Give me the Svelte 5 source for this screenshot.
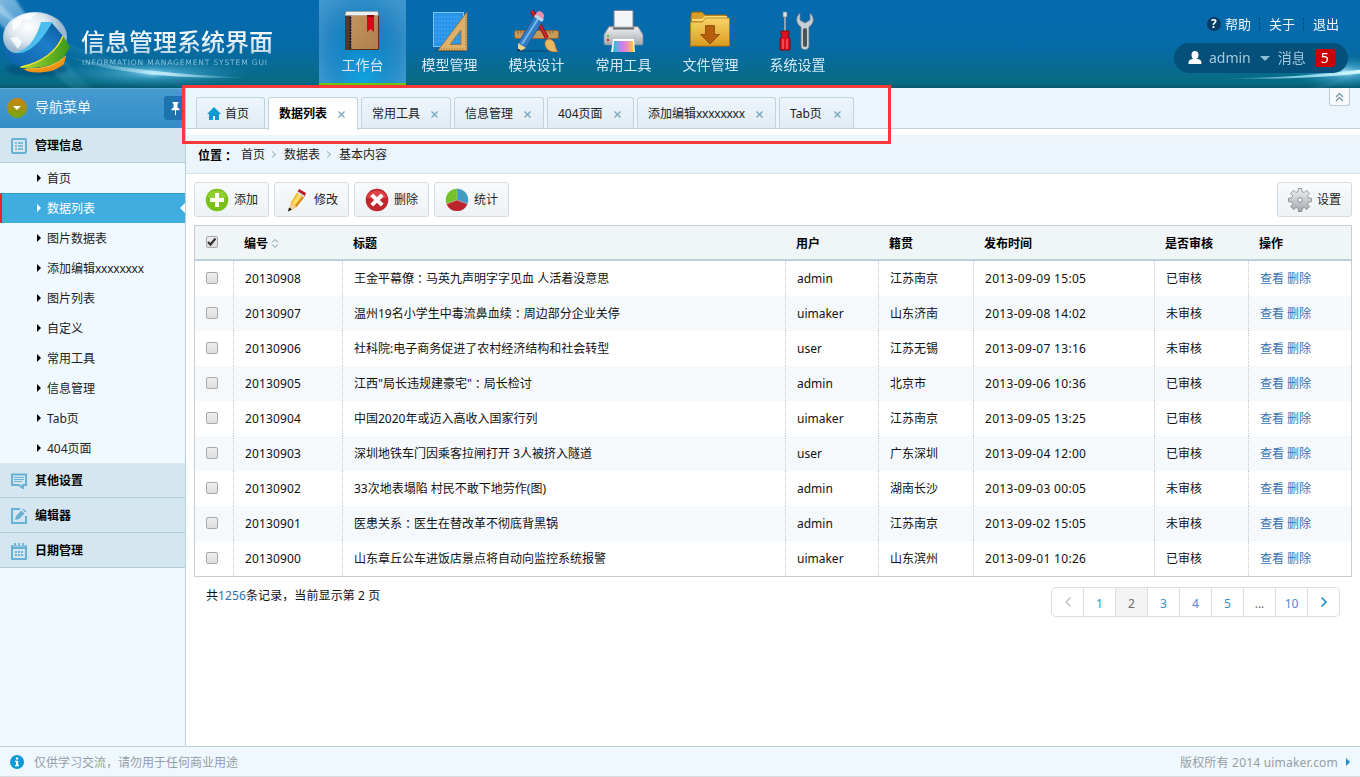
<script>
  const nav = ['工作台', '模型管理', '模块设计', '常用工具', '文件管理', '系统设置'];
  const menu = ['首页', '数据列表', '图片数据表', '添加编辑xxxxxxxx', '图片列表', '自定义', '常用工具', '信息管理', 'Tab页', '404页面'];
  const tabs = [
    ['首页', 69], ['数据列表', 90], ['常用工具', 90], ['信息管理', 90],
    ['404页面', 87], ['添加编辑xxxxxxxx', 139], ['Tab页', 75]
  ];
  const heads = ['标题', '用户', '籍贯', '发布时间', '是否审核', '操作'];
  const rows = [
    ['20130908', '王金平幕僚：马英九声明字字见血 人活着没意思', 'admin', '江苏南京', '2013-09-09 15:05', '已审核'],
    ['20130907', '温州19名小学生中毒流鼻血续：周边部分企业关停', 'uimaker', '山东济南', '2013-09-08 14:02', '未审核'],
    ['20130906', '社科院:电子商务促进了农村经济结构和社会转型', 'user', '江苏无锡', '2013-09-07 13:16', '未审核'],
    ['20130905', '江西"局长违规建豪宅"：局长检讨', 'admin', '北京市', '2013-09-06 10:36', '已审核'],
    ['20130904', '中国2020年或迈入高收入国家行列', 'uimaker', '江苏南京', '2013-09-05 13:25', '已审核'],
    ['20130903', '深圳地铁车门因乘客拉闸打开 3人被挤入隧道', 'user', '广东深圳', '2013-09-04 12:00', '已审核'],
    ['20130902', '33次地表塌陷 村民不敢下地劳作(图)', 'admin', '湖南长沙', '2013-09-03 00:05', '未审核'],
    ['20130901', '医患关系：医生在替改革不彻底背黑锅', 'admin', '江苏南京', '2013-09-02 15:05', '未审核'],
    ['20130900', '山东章丘公车进饭店景点将自动向监控系统报警', 'uimaker', '山东滨州', '2013-09-01 10:26', '已审核']
  ];
  const pages = ['<', '1', '2', '3', '4', '5', '...', '10', '>'];
</script>

{#snippet txt(s)}{#each s.split(/(：|x{3,})/) as p}{#if p === '：'}<span class="punct">{p}</span>{:else if p.startsWith('xxx')}<span class="tight">{p}</span>{:else}{p}{/if}{/each}{/snippet}

{#snippet navIcon(i)}
  <svg width="45" height="45" viewBox="0 0 45 45">
    {#if i === 0}
      <rect x="5" y="5" width="34" height="38" rx="1" fill="#5a2f16" />
      <rect x="11" y="6" width="27" height="36" fill="url(#wood)" />
      <rect x="5" y="5" width="6" height="37" fill="#4c3b33" />
      <path d="M10.500 7v35" stroke="#241510" stroke-width="1.500" stroke-dasharray="2 1" />
      <path d="M6 4.500h32l.5 4H5z" fill="#eef0ef" stroke="#9b8c7f" stroke-width=".5" />
      <path d="M27 8h7v17l-3.500-3-3.500 3z" fill="#d10b15" /><path d="M27 8h7v2h-7z" fill="#87060a" />
    {:else if i === 1}
      <ellipse cx="24" cy="43.500" rx="17" ry="1.500" fill="#06476e" opacity=".6" />
      <rect x="6.500" y="5.500" width="30" height="34" fill="#238fe8" stroke="#79c9fa" />
      <path d="M9 7v31M12 7v31M15 7v31M18 7v31M21 7v31M24 7v31M27 7v31M30 7v31M33 7v31M7 10h30M7 14h30M7 18h30M7 22h30M7 26h30M7 30h30M7 34h30" stroke="#50aef3" stroke-width=".5" />
      <path fill-rule="evenodd" d="M11 43.500 40 5v38.500zM23 37.500h11V23z" fill="#e0b069" stroke="#9a6d33" stroke-width=".8" />
      <path d="M14 42h23M38.500 10v30" stroke="#9a6d33" stroke-width="1.300" stroke-dasharray=".7 2" />
    {:else if i === 2}
      <ellipse cx="23" cy="44.500" rx="18" ry="1.500" fill="#06476e" opacity=".6" />
      <rect x=".5" y="23.500" width="44" height="8" rx="2" fill="#c99958" stroke="#916331" />
      <path d="M4 24v3m3-3v2m3-2v3m3-3v2m3-2v3m14-3v3m3-3v2m3-2v3m3-3v2" stroke="#6d4824" stroke-width=".8" />
      <path d="m18 4 15 27" stroke="#861118" stroke-width="4" /><path d="m18 4 15 27" stroke="#df2430" stroke-width="2" />
      <path d="M31 35c2-5 7-3 9 0 2 3 1 6 4 10-8 1-14-3-13-10z" fill="#e9b864" stroke="#95682e" stroke-width=".7" />
      <path d="m4 36 16-26 8 5-16 26-8 4z" fill="#327bc3" stroke="#17538d" stroke-width=".8" />
      <path d="M8 37 24 12" stroke="#76b8e8" stroke-width="2" />
      <path d="m20 10 2-3 8 5-2 3z" fill="#b9d6ea" />
      <path d="m22 7 1-2c3-2 7 1 7 4l-1 3z" fill="#f391a8" /><path d="m4 36 8 5-8 4z" fill="#f1d28c" /><path d="m4 42 3 1-3 2z" fill="#111" />
    {:else if i === 3}
      <path d="M8 19h29l5 8H3z" fill="#8f969d" /><path d="M13 3.500h19v17H13z" fill="#f4f5f7" stroke="#7a858f" />
      <path d="M8 20h29l5 8v8q0 2-2 2H5q-2 0-2-2v-8z" fill="url(#metal)" stroke="#858c94" stroke-width=".6" />
      <path d="M12 21.500h21" stroke="#63676d" stroke-width="2" />
      <path d="M12 32h21l1 14H10z" fill="white" /><path d="M13 34h19l1 11H12z" fill="url(#ink)" />
      <circle cx="7" cy="29" r="1.200" fill="#69c620" /><circle cx="7" cy="33" r="1.200" fill="#d82520" />
    {:else if i === 4}
      <path d="M3 8q0-3 2-3h9l3 3h21l2 3v28H3z" fill="#d99e28" stroke="#8f6515" />
      <path d="M4 12h10l3-3h22v5H4z" fill="#f8dc79" />
      <path d="M2.500 15h12l3-4h24v28h-39z" fill="url(#folder)" stroke="#ad7617" stroke-width=".8" />
      <path d="M17.500 18.500h9v9h5l-9.500 9.500-9.500-9.500h5z" fill="#b55f0b" stroke="#86450c" stroke-width=".8" />
    {:else}
      <g transform="translate(-4 0)">
        <path d="M14 6v19" stroke="#9ea9b3" stroke-width="1.800" /><rect x="12" y="5" width="4" height="5" fill="#d9e0e5" stroke="#737c83" stroke-width=".6" />
        <path d="M10 24h8v3l-1 2 2 3v11H9V32l2-3-1-2z" fill="#d71322" stroke="#840b15" /><path d="M12 32v10m4-10v10" stroke="#ff6d70" stroke-width="1.200" />
        <path d="M29 6c-5 4-4 11 1 14v19c0 5 8 5 8 0V20c5-3 6-10 1-14v7l-5 3-5-3z" fill="#c6d0d7" stroke="#6b7680" stroke-width=".8" />
        <rect x="32" y="21" width="4" height="19" rx="2" fill="#4c5359" />
      </g>
    {/if}
  </svg>
{/snippet}

<div class="page">
  <header>
    <svg class="backdrop" width="1360" height="88" viewBox="0 0 1360 88">
      <defs>
        <linearGradient id="wood" x2="1" y2="1"><stop stop-color="#c4935f" /><stop offset="1" stop-color="#b07f4e" /></linearGradient>
        <linearGradient id="metal" x2="0" y2="1"><stop stop-color="#eef0f2" /><stop offset="1" stop-color="#a2a8af" /></linearGradient>
        <linearGradient id="ink"><stop stop-color="#20c6d6" /><stop offset=".45" stop-color="#d27af0" /><stop offset=".7" stop-color="#ef8fb0" /><stop offset="1" stop-color="#ffd72e" /></linearGradient>
        <linearGradient id="folder" x2="0" y2="1"><stop stop-color="#f8d467" /><stop offset="1" stop-color="#dc9b20" /></linearGradient>
        <linearGradient id="beam" x2="1" y2="1"><stop stop-color="#cce9fb" stop-opacity=".95" /><stop offset=".45" stop-color="#7fc4ec" stop-opacity=".55" /><stop offset="1" stop-color="#6ac0e0" stop-opacity=".1" /></linearGradient>
        <radialGradient id="flare"><stop stop-color="#c9f4ff" /><stop offset=".25" stop-color="#6dc8ee" stop-opacity=".65" /><stop offset="1" stop-color="#2a94c8" stop-opacity="0" /></radialGradient>
        <radialGradient id="globe" cx=".4" cy=".3"><stop stop-color="#fff" /><stop offset=".6" stop-color="#dde7f0" /><stop offset="1" stop-color="#9db9cf" /></radialGradient>
        <linearGradient id="ribbon" x1="0" y1="1" x2="1" y2="0"><stop stop-color="#0c5ea6" /><stop offset=".6" stop-color="#1b7fc8" /><stop offset="1" stop-color="#0d5799" /></linearGradient>
        <linearGradient id="leaf"><stop stop-color="#b6dc35" /><stop offset="1" stop-color="#379719" /></linearGradient>
        <linearGradient id="title" x2="0" y2="1"><stop stop-color="#fff" /><stop offset=".5" stop-color="#edf6fb" /><stop offset="1" stop-color="#a9cbdc" /></linearGradient>
        <linearGradient id="streak"><stop stop-color="#a9e6fb" stop-opacity="0" /><stop offset=".55" stop-color="#d9f7ff" /><stop offset="1" stop-color="#a9e6fb" stop-opacity="0" /></linearGradient>
        <linearGradient id="streakEnd"><stop stop-color="#8fe0f2" stop-opacity="0" /><stop offset=".5" stop-color="#8fe0f2" stop-opacity=".8" /><stop offset="1" stop-color="#e0fbff" /></linearGradient>
        <filter id="soft"><feGaussianBlur stdDeviation="1.5" /></filter>
        <filter id="fine"><feGaussianBlur stdDeviation=".5" /></filter>
      </defs>
      <g filter="url(#soft)">
        <path d="M-5-5h18q30 50 82 96H75Q20 45-5 19z" fill="url(#beam)" opacity=".7" />
        <path d="M-4 0Q45 57 158 72L242 77Q90 81-5 10z" fill="url(#beam)" opacity=".6" />
        <path d="M15 3q30 46 130 66" stroke="#8bd0f0" fill="none" opacity=".4" />
        <ellipse cx="152" cy="73" rx="100" ry="14" fill="url(#flare)" opacity=".85" />
        <ellipse cx="152" cy="73" rx="22" ry="7" fill="url(#flare)" />
        <ellipse cx="1345" cy="72" rx="55" ry="16" fill="url(#flare)" />
        <path d="M1310 90q25-5 50-19" stroke="#7acbe4" fill="none" opacity=".4" />
      </g>
      <g filter="url(#fine)">
        <path d="M65 56q75 18 185 21.500Q125 80 65 56z" fill="url(#streak)" opacity=".8" />
        <path d="M1220 78.500q85-1 145-9.500v4q-60 7-145 5.500z" fill="url(#streakEnd)" />
      </g>
      <ellipse cx="37" cy="69" rx="31" ry="7" fill="#044570" opacity=".5" filter="url(#soft)" />
      <ellipse cx="35" cy="37" rx="32" ry="25" fill="url(#globe)" />
      <path d="M12 22q12-11 24-8l-7 6-6-1-4 8-6 4zM10 38l8-1 4 5-4 7z" fill="#fff" opacity=".8" />
      <path d="M13 53c16-2 23-15 28-31l12 0q-8 22-33 34z" fill="#4dbdee" />
      <path d="M3 42c4 8 9 12 17 11 14-2 24-17 32-30l11 13q-10 28-44 30Q4 62 3 42z" fill="url(#ribbon)" />
      <path d="M63 36q-11 26-44 31 5 2 12 1 26-1 35-14l4-7z" fill="url(#leaf)" />
      <path d="M63 36q-10 24-42 31" fill="none" stroke="#e9e32d" stroke-width="1.500" />
      <path d="M66 56q-15 14-43 13 8 5 21 3 12-1 20-8z" fill="#f29213" />
      <path d="M66 56q-14 14-40 13" fill="none" stroke="#ffc53c" />
      <text x="81" y="50.500" class="brand" textLength="192">信息管理系统界面</text>
      <text x="82" y="65" class="brand-sub" textLength="185" lengthAdjust="spacing">INFORMATION MANAGEMENT SYSTEM GUI</text>
    </svg>
    <nav class="top-nav">
      {#each nav as n, i}
        <a class:active={i === 0}>{@render navIcon(i)}<span>{n}</span></a>
      {/each}
    </nav>
    <div class="account">
      <div class="links"><i class="help">?</i><span>帮助</span><b></b><span>关于</span><b></b><span>退出</span></div>
      <div class="pill">
        <svg width="14" height="14" viewBox="0 0 14 14"><path d="M3.500 4a3.500 4 0 0 1 7 0c0 2-1 3-1.500 4 4 .5 4.500 2 4.500 5H.5c0-3 .5-4.500 4.500-5-.5-1-1.500-2-1.500-4" fill="#fff" /></svg>
        <span class="name">admin</span><i class="caret"></i><span>消息</span><em>5</em>
      </div>
    </div>
  </header>

  <div class="body">
    <aside>
      <div class="side-head"><i class="disc"></i><span>导航菜单</span>
        <div class="pin"><svg width="9" height="13" viewBox="0 0 9 13"><path d="M1.500 0h6v1l-1 .8v3.700l2 1.500v1.200H5V13H4V8.200H.5V7l2-1.500V1.800l-1-.8z" fill="#fff" /></svg></div>
      </div>
      <div class="group"><svg width="16" height="16" viewBox="0 0 16 16"><rect x="1" y="1" width="14" height="14" rx="1" fill="none" stroke="#66b1d4" stroke-width="2" /><path d="M4 5h2m1 0h5M4 8h2m1 0h5m-8 3h2m1 0h5" stroke="#66b1d4" stroke-width="1.500" /></svg>管理信息</div>
      <div class="items">
        {#each menu as m, i}<a class:current={i === 1}><i></i><span>{@render txt(m)}</span></a>{/each}
      </div>
      <div class="group"><svg width="16" height="16" viewBox="0 0 16 16"><path d="M1 1.500h14V12h-3v3l-4-3H1z" fill="none" stroke="#66b1d4" stroke-width="2" /><path d="M3 4.500h10M3 6.500h10m-10 2h8" stroke="#66b1d4" /></svg>其他设置</div>
      <div class="group"><svg width="16" height="16" viewBox="0 0 16 16"><path d="M9 1H1v14h14V8" fill="none" stroke="#66b1d4" stroke-width="2" /><path d="m5 8 5.500-5.500 3 3L8 11l-4 1zm6.500-6.500L12.500.5l3 3-1 1z" fill="#66b1d4" /></svg>编辑器</div>
      <div class="group"><svg width="16" height="17" viewBox="0 0 16 17"><path fill-rule="evenodd" d="M0 3q0-1 1-1h14q1 0 1 1v13q0 1-1 1H1q-1 0-1-1zM2 6v9h12V6z" fill="#66b1d4" /><path d="M4 0v3.500M8 0v3.500M12 0v3.500" stroke="#d4e6ef" stroke-width="3.400" /><path d="M4 0v3M8 0v3m4-3v3" stroke="#66b1d4" stroke-width="1.800" /><path d="M4 9h2m1 0h2m1 0h2m-8 3h2m1 0h2m1 0h2" stroke="#66b1d4" stroke-width="2" /></svg>日期管理</div>
    </aside>

    <main>
      <div class="tabs">
        {#each tabs as [t, w], i}
          <div class="tab" class:on={i === 1} style:width="{w}px">
            {#if i === 0}<svg width="14" height="13" viewBox="0 0 14 13"><path d="m7 0 7 7h-2v6H8V9H6v4H2V7H0z" fill="#0a9ad7" /></svg>{/if}
            <span>{@render txt(t)}</span>
            {#if i > 0}<svg class="close" width="7" height="7" viewBox="0 0 7 7"><path d="m.5.5 6 6m0-6-6 6" stroke="#75a3bc" stroke-width="1.200" /></svg>{/if}
          </div>
        {/each}
        <div class="fold"><svg width="9" height="10" viewBox="0 0 9 10"><path d="m1 5 3.500-3.500L8 5M1 9l3.500-3.500L8 9" fill="none" stroke="#7498aa" stroke-width="1.300" /></svg></div>
      </div>
      <div class="crumbs"><strong>位置<span class="punct">：</span></strong><span>首页</span><i></i><span>数据表</span><i></i><span>基本内容</span></div>

      <div class="tools">
        <button><svg width="24" height="24" viewBox="0 0 24 24"><circle cx="12" cy="12" r="11.300" fill="#79c118" /><path d="M2 9a11 11 0 0 1 20 0q-10 6-20 0" fill="#a0d845" opacity=".6" /><path d="M10 5h4v5h5v4h-5v5h-4v-5H5v-4h5z" fill="#fff" /></svg>添加</button>
        <button><svg width="24" height="24" viewBox="0 0 24 24"><path d="m6 14 7-11 7 5-8 11-8 4z" fill="#f3bd34" /><path d="m8.500 16 8-11" stroke="#ffe06f" stroke-width="3" /><path d="m11 18 8-10" stroke="#cf8922" stroke-width="2" /><path d="m12.500 4 1.500-3 7 4-1.500 4z" fill="#b71925" /><path d="m12 5 7 4.500 1-1.500-7-4.500z" fill="#dde3e6" /><path d="m5.500 15 6 4-8 4z" fill="#f1d196" /><path d="m4 19.500 3 2-4 2z" fill="#111" /></svg>修改</button>
        <button><svg width="24" height="24" viewBox="0 0 24 24"><circle cx="12" cy="12" r="11.300" fill="#c0272e" /><path d="M2 9a11 11 0 0 1 20 0q-10 6-20 0" fill="#ef5358" opacity=".65" /><path d="m6.800 6.800 10.400 10.400m0-10.400L6.800 17.200" stroke="#fff" stroke-width="4" /></svg>删除</button>
        <button><svg width="24" height="24" viewBox="0 0 24 24"><path d="M12 12V.7A11.300 11.300 0 0 0 1.500 16z" fill="#75c12b" /><path d="M12 12V.7A11.300 11.300 0 0 1 22.500 16z" fill="#439bc5" /><path d="m12 12 10.500 4a11.300 11.300 0 0 1-21 0z" fill="#bb242e" /><path d="M12 1v11L2 16m10-4 10 4" fill="none" stroke="#fff" stroke-width=".5" opacity=".5" /></svg>统计</button>
        <button class="settings"><svg width="24" height="24" viewBox="0 0 24 24"><path d="M10.200.5h3.600v3l2.500 1 2.200-2.200 3.200 3.200-2.200 2.200 1.200 2.500h3v3.600h-3l-1.200 2.500 2.200 2.200-3.200 3.200-2.200-2.200-2.300 1v3h-3.600v-3l-2.500-1-2.200 2.200-3.200-3.200 2.200-2.200-1.200-2.500h-3v-3.600h3l1.200-2.500-2.200-2.200 3.200-3.200 2.200 2.200 2.300-1z" fill="url(#metal)" stroke="#8b8e91" stroke-width=".9" /><circle cx="12" cy="12" r="2.300" fill="#f3f4f5" stroke="#888b8e" /></svg>设置</button>
      </div>

      <div class="table">
        <div class="row head">
          <div><i class="check"><svg width="12" height="12" viewBox="0 0 12 12"><path d="m2 6 2.500 2.500L9.500 2.500" fill="none" stroke="#333" stroke-width="2.200" /></svg></i></div>
          <div>编号<svg class="sort" width="8" height="9" viewBox="0 0 8 9"><path d="m1 3.500 3-3 3 3m-6 2 3 3 3-3" fill="none" stroke="#6f95a5" /></svg></div>
          {#each heads as h}<div>{h}</div>{/each}
        </div>
        {#each rows as r, i}
          <div class="row" class:odd={i % 2 === 1}>
            <div><i class="check"></i></div>
            {#each r as c, k}<div class:num={k === 0} class:date={k === 4}><span>{@render txt(c)}</span></div>{/each}
            <div class="ops"><a>查看</a> <a>删除</a></div>
          </div>
        {/each}
      </div>

      <div class="summary">
        <p>共<b>1256</b>条记录，当前显示第 2 页</p>
        <div class="pager">
          {#each pages as p, i}
            <a class:grey={i === 2 || i === 6} class:here={i === 2}>
              {#if i === 0}<svg width="8" height="12" viewBox="0 0 8 12"><path d="M6.500 1.500 2 6l4.500 4.500" fill="none" stroke="#b8bcbe" stroke-width="1.200" /></svg>
              {:else if i === 8}<svg width="8" height="12" viewBox="0 0 8 12"><path d="M1.500 1.500 6 6l-4.500 4.500" fill="none" stroke="#2390c3" stroke-width="1.700" /></svg>
              {:else}{p}{/if}
            </a>
          {/each}
        </div>
      </div>
    </main>
  </div>

  <footer>
    <svg width="14" height="14" viewBox="0 0 14 14"><circle cx="7" cy="7" r="7" fill="#0c9ad8" /><path d="M6 2.500h2.200v2H6zM5 5.700h3.200V10H9v1.300H5V10h1V7H5z" fill="#fff" /></svg>
    <span>仅供学习交流，请勿用于任何商业用途</span>
    <span class="copy">版权所有 2014 uimaker.com</span><i></i>
  </footer>
  <div class="marker"></div>
</div>

<style>
  :global(body) { margin: 0; background: #fff; }
  .page { position: relative; display: flex; flex-direction: column; height: 777px; width: 1360px; overflow: hidden; box-sizing: border-box; font: 12px/18px "Noto Sans", "Noto Sans CJK SC", sans-serif; color: #111; }
  .page * { box-sizing: border-box; }
  i, em { font-style: normal; }
  svg { flex: none; display: block; }
  .punct { font-family: "Noto Sans CJK TC", sans-serif; position: relative; top: 1px; }
  .tight { letter-spacing: -.25px; }

  header { position: relative; display: flex; height: 88px; flex: none; background: linear-gradient(#056bb0, #066ba9 50%, #086b83 94%, #07586f); padding-left: 319px; }
  .backdrop { position: absolute; inset: 0; }
  .brand { font: 500 24px "Noto Sans CJK SC", sans-serif; fill: url(#title); }
  .brand-sub { font: 7.5px "DejaVu Sans", sans-serif; fill: #86bfd8; }
  .top-nav { position: relative; display: flex; }
  .top-nav a { width: 87px; height: 85px; padding-top: 7px; display: flex; flex-direction: column; align-items: center; font-size: 14px; line-height: 20px; color: #d5eaf5; }
  .top-nav span { margin-top: 3px; }
  .top-nav a.active { background: radial-gradient(ellipse at 50% 100%, #0da3e0 0, #0e8fce88 40%, transparent 75%), radial-gradient(ellipse at center, #1476b8 20%, #3f96cd 90%); border-bottom: 2px solid #6cc511; }
  .account { position: relative; margin-left: auto; padding-right: 12px; }
  .links { display: flex; align-items: center; height: 20px; margin: 14px 9px 9px 33px; font-size: 13px; color: #eef6fb; }
  .links b { height: 12px; border-left: 1px dotted #083e67; margin: 0 9px 0 8px; }
  .help { width: 14px; height: 14px; margin-right: 4px; border-radius: 50%; background: #073b64; color: #fff; font-weight: 700; font-size: 12px; line-height: 14px; text-align: center; }
  .pill { display: flex; align-items: center; width: 174px; height: 30px; padding-left: 14px; border-radius: 15px; background: #04507b; color: #a6cbdc; font-size: 14px; }
  .pill .name { margin-left: 7px; }
  .caret { margin: 0 8px 0 9px; border: 5px solid transparent; border-top-color: #8fbdd1; border-bottom: 0; }
  .pill em { width: 20px; height: 18px; margin-left: 9px; border-radius: 2px; background: #ca0202; color: #fff; line-height: 18px; text-align: center; }

  .body { display: flex; flex: 1; min-height: 0; }
  aside { width: 186px; flex: none; background: #f0f9ff; border-right: 1px solid #b7d0da; }
  .side-head { display: flex; align-items: center; height: 40px; padding-left: 7px; background: linear-gradient(#469bcf, #358ec8); border-top: 1px solid #61acd8; color: #e9f5fc; font-size: 14px; }
  .side-head > span { margin-top: -3px; }
  .disc { display: flex; align-items: center; justify-content: center; width: 20px; height: 20px; margin: -1px 8px 0 0; border-radius: 50%; background: linear-gradient(#cf820a, #72a912); }
  .disc::after { content: ""; border: 4px solid transparent; border-top-color: #fff; border-bottom: 0; }
  .pin { display: flex; align-items: center; justify-content: center; width: 21px; height: 24px; margin: -1px 0 0 auto; background: #1c73ae; border-radius: 3px 0 0 3px; padding-left: 2px; }
  .group { display: flex; align-items: center; gap: 8px; height: 35px; padding: 2px 0 0 11px; background: #d4e6ef; border-bottom: 1px solid #b3cbd5; font-weight: 700; color: #000; }
  .items a { display: flex; align-items: center; height: 30px; padding: 2px 0 0 37px; color: #222; }
  .items i { margin: -3px 6px 0 0; border: 4px solid transparent; border-left-color: #000; border-right: 0; }
  .items a.current { padding: 0 0 0 35px; background: #40ade1; border-left: 2px solid #e8242b; border-top: 1px solid #2f9bcf; color: #fff; }
  .items a.current i { margin-top: -1px; border-left-color: #fff; }
  .items a.current::after { content: ""; margin: -1px 0 0 auto; border: 5px solid transparent; border-right-color: #fff; border-left: 0; }

  main { flex: 1; min-width: 0; display: flex; flex-direction: column; }
  .tabs { display: flex; flex: none; gap: 3px; height: 41px; padding: 9px 10px 0; background: #edf5fc; border-bottom: 1px solid #c1d2db; }
  .tab { display: flex; align-items: center; height: 31px; padding: 2px 0 0 10px; border: 1px solid #c1d3dc; border-bottom: 0; border-radius: 3px 3px 0 0; background: linear-gradient(#edf5fb, #e1ecf2); color: #222; white-space: nowrap; }
  .tab:first-child { gap: 4px; }
  .tab:first-child svg { margin-top: -2px; }
  .tab.on { height: 33px; padding-bottom: 2px; background: #fff; font-weight: 700; color: #000; }
  .close { margin-left: auto; margin-right: 12px; }
  .fold { display: flex; align-items: center; justify-content: center; width: 21px; height: 18px; margin: -9px 0 0 auto; border: 1px solid #b9cbd4; border-top: 0; border-radius: 0 0 3px 3px; background: #f7fafc; }
  .crumbs { display: flex; align-items: center; flex: none; height: 39px; margin-top: 6px; padding: 2px 0 0 12px; background: linear-gradient(#edf6f9, #edf5fc 25%); border-bottom: 1px solid #d2e3ed; color: #222; }
  .crumbs strong { margin-right: 7px; color: #000; }
  .crumbs i { width: 5px; height: 5px; margin: -2px 9px 0 5px; border: solid #9db6c0; border-width: 1px 1px 0 0; transform: rotate(45deg); }

  .tools { display: flex; flex: none; gap: 5px; padding: 8px 8px; }
  .tools button { display: flex; align-items: center; gap: 5px; width: 75px; height: 35px; padding: 0 0 0 10px; border: 1px solid #d3dbe0; border-radius: 3px; background: linear-gradient(#f8fafb, #edf2f5); font: inherit; color: #222; white-space: nowrap; }
  .tools .settings { margin-left: auto; }

  .table { flex: none; margin: 0 8px; border: 1px solid #c9cdd0; }
  .row { display: grid; grid-template-columns: 39px 109px 443px 93px 95px 181px 94px 102px; height: 35px; }
  .row > div { display: flex; align-items: center; padding-left: 11px; border-right: 1px dotted #c5c9cc; white-space: nowrap; }
  .row > div:last-child { border-right: 0; }
  .row.odd { background: #f5f9fc; }
  .row.head { background: #f0f5f8; border-bottom: 2px solid #b9d0d8; font-weight: 700; color: #000; }
  .row.head > div { padding: 2px 0 0 10px; border-color: transparent; }
  .row.head > div:first-child { padding: 0 0 0 11px; }
  .row .num { letter-spacing: .12px; }
  .row .date { letter-spacing: .3px; }
  .check { display: block; width: 12px; height: 12px; margin-top: -2px; border: 1px solid #a9a9a9; border-radius: 2px; background: linear-gradient(#eee, #dedede); }
  .head .check { margin-top: -1px; }
  .check svg { margin: -1px; }
  .sort { margin: 0 0 0 3px; }
  .ops { gap: 3px; color: #3a72ae; }

  .summary { display: flex; justify-content: space-between; padding: 10px 20px 0; }
  .summary p { margin: 0; letter-spacing: .1px; }
  .summary b { font-weight: 400; color: #2a70ae; }
  .pager { display: flex; height: 30px; border: 1px solid #ddd; border-radius: 5px; overflow: hidden; }
  .pager a { display: flex; align-items: center; justify-content: center; width: 32px; padding-top: 3px; border-right: 1px solid #ddd; color: #3b91d0; }
  .pager a:first-child, .pager a:last-child { padding-top: 0; }
  .pager a:last-child { width: 31px; border: 0; }
  .pager a.grey { color: #6c6c6c; }
  .pager a.here { background: #f3f3f3; }

  footer { display: flex; align-items: center; flex: none; height: 31px; padding: 0 10px; background: #eff8fe; border-top: 1px solid #b9cfd9; border-bottom: 1px solid #d8dcde; color: #949ea4; }
  footer > svg { margin-right: 10px; }
  footer > span { margin-top: 2px; }
  .copy { margin-left: auto; letter-spacing: .2px; }
  footer > i { margin-left: 8px; border: 4px solid transparent; border-left-color: #168fc6; border-right: 0; }
  .marker { position: absolute; left: 182px; top: 85px; width: 709px; height: 59px; border: 3px solid #fb3939; pointer-events: none; }
</style>
